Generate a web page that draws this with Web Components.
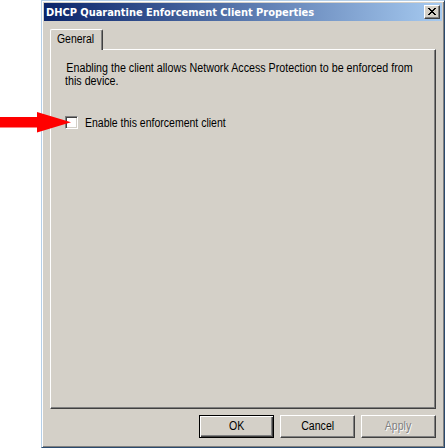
<!DOCTYPE html>
<html lang="en"><head><meta charset="utf-8"><title>DHCP Quarantine Enforcement Client Properties</title>
<style>
html,body{margin:0;width:445px;height:448px;overflow:hidden;background:#fff}
body{display:flex;font:12px/13px "Liberation Sans",Arial,sans-serif;color:#000;position:relative}
pointer-arrow{position:absolute;left:0;top:112px}
property-window{margin-left:41px}
</style></head><body>
<property-window caption="DHCP Quarantine Enforcement Client Properties">
<tab-pane label="General">
<info-text>Enabling the client allows Network Access Protection to be enforced from<br>this device.</info-text>
<check-option>Enable this enforcement client</check-option>
</tab-pane>
<push-button slot="actions" primary>OK</push-button>
<push-button slot="actions">Cancel</push-button>
<push-button slot="actions" disabled>Apply</push-button>
</property-window>
<pointer-arrow></pointer-arrow>
<script>
function define(name, html){
  customElements.define(name, class extends HTMLElement{
    constructor(){
      super();
      const t=document.createElement('template');
      t.innerHTML=html;
      this.attachShadow({mode:'open'}).append(t.content.cloneNode(true));
      this.shadowRoot.querySelectorAll('[data-attr]').forEach(e=>e.textContent=this.getAttribute(e.dataset.attr));
    }
  });
}
define('close-button',`<style>
:host{display:block;box-sizing:border-box;width:16px;height:14px;background:#d4d0c8;border:1px solid;border-color:#fff #404040 #404040 #fff;box-shadow:inset -1px -1px #808080}
svg{display:block}</style>
<svg width="14" height="12" shape-rendering="crispEdges"><path fill="#000" d="M3 2h2v1h1v1h2v-1h1v-1h2v1h-1v1h-1v1h-1v1h1v1h1v1h1v1h-2v-1h-1v-1h-2v1h-1v1h-2v-1h1v-1h1v-1h1v-1h-1v-1h-1v-1h-1z"/></svg>`);
define('property-window',`<style>
:host{display:flex;flex-direction:column;box-sizing:border-box;width:404px;height:448px;background:#d4d0c8;border:1px solid;border-color:#b5cfe8 #2b4a6d #2b4a6d #b5cfe8;box-shadow:inset 1px 1px #fff,inset -1px -1px #808080;padding:2px 2px 0}
header{display:flex;align-items:center;height:18px;box-sizing:border-box;padding:0 2px 0 2px;background:linear-gradient(90deg,#0a246a,#a6caf0)}
.cap{flex:1;white-space:nowrap;color:#fff;padding-top:2px;letter-spacing:-.03px;font:bold 11px/16px "DejaVu Sans Condensed","DejaVu Sans",sans-serif}
main{display:flex;padding:8px 6px 0 6px}
footer{display:flex;gap:6px;justify-content:flex-end;padding:6px 6px 0}
</style><header><span class="cap" data-attr="caption"></span><close-button></close-button></header><main><slot></slot></main><footer><slot name="actions"></slot></footer>`);
define('tab-pane',`<style>
:host{display:flex;flex-direction:column;flex:1;min-width:0}
.tab{box-sizing:border-box;width:53px;height:21px;margin-bottom:-1px;z-index:1;background:#d4d0c8;border:1px solid;border-color:#fff #404040 transparent #fff;border-bottom:0;border-radius:2px 2px 0 0;box-shadow:inset -1px 0 #808080;padding:3px 0 0 6px}
.tab span{display:inline-block;transform:scaleX(.87);transform-origin:0 0}
.page{height:360px;box-sizing:border-box;border:1px solid;border-color:#fff #404040 #404040 #fff;box-shadow:inset -1px -1px #808080;padding:12px 0 0 14px}
</style><div class="tab"><span data-attr="label"></span></div><div class="page"><slot></slot></div>`);
define('info-text',`<style>:host{display:block;white-space:nowrap;width:max-content;text-indent:1.5px;transform:scaleX(.892);transform-origin:0 0}</style><slot></slot>`);
define('check-option',`<style>
:host{display:flex;align-items:center;gap:7px;margin-top:27px;height:14px}
i{box-sizing:border-box;width:13px;height:13px;background:#fff;border:1px solid;border-color:#808080 #fff #fff #808080;box-shadow:inset 1px 1px #404040,inset -1px -1px #d4d0c8}
span{padding-top:3px;transform:scaleX(.875);transform-origin:0 0}
</style><i></i><span><slot></slot></span>`);
define('push-button',`<style>
:host{display:flex;align-items:center;justify-content:center;box-sizing:border-box;width:75px;height:23px;border:1px solid;border-color:#fff #404040 #404040 #fff;box-shadow:inset -1px -1px #808080}
:host([primary]){border-color:#000;box-shadow:inset 1px 1px #fff,inset -1px -1px #404040,inset -2px -2px #808080}
:host([disabled]){color:#808080;text-shadow:1px 1px #fff}
span{transform:scaleX(.88)}
</style><span><slot></slot></span>`);
define('pointer-arrow',`<style>:host{display:block}svg{display:block}</style><svg width="72" height="21"><path fill="#f00" d="M0 5H37V0L71 10.300L37 20.500V15.500H0z"/></svg>`);
</script>
</body></html>
